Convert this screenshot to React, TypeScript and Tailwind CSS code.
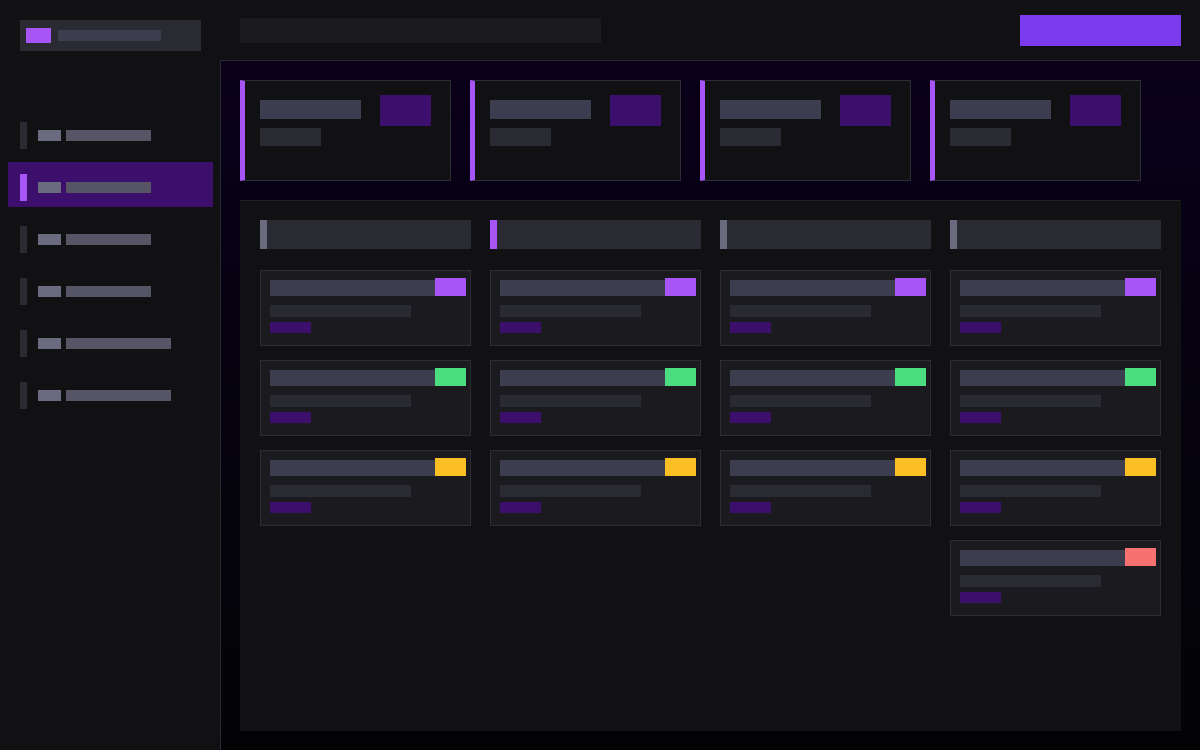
const navItems = [
  { width: "w-[85px]", active: false },
  { width: "w-[85px]", active: true },
  { width: "w-[85px]", active: false },
  { width: "w-[85px]", active: false },
  { width: "w-[105px]", active: false },
  { width: "w-[105px]", active: false },
];

const columns = [
  { accent: "bg-[#6b6b80]", tags: ["bg-[#a855f7]", "bg-[#4ade80]", "bg-[#fbbf24]"] },
  { accent: "bg-[#a855f7]", tags: ["bg-[#a855f7]", "bg-[#4ade80]", "bg-[#fbbf24]"] },
  { accent: "bg-[#6b6b80]", tags: ["bg-[#a855f7]", "bg-[#4ade80]", "bg-[#fbbf24]"] },
  {
    accent: "bg-[#6b6b80]",
    tags: ["bg-[#a855f7]", "bg-[#4ade80]", "bg-[#fbbf24]", "bg-[#f87171]"],
  },
];

const NavItem = ({ width, active }: { width: string; active: boolean }) => (
  <div
    className={`mx-2 flex h-[45px] w-[205px] items-start pl-3 pt-3 ${
      active ? "bg-[#3b0f6b]" : ""
    }`}
  >
    <div className={`h-[27px] w-[7px] ${active ? "bg-[#a855f7]" : "bg-[#2a2a33]"}`} />
    <div className="ml-[11px] mt-2 h-[11px] w-[23px] bg-[#6b6b80]" />
    <div className={`ml-[5px] mt-2 h-[11px] bg-[#555566] ${width}`} />
  </div>
);

const StatCard = () => (
  <div className="flex h-[101px] w-[211px] border border-l-[5px] border-[#2d2d35] border-l-[#a855f7] bg-[#111113] pl-[15px] pt-[14px]">
    <div className="flex flex-col">
      <div className="mt-[5px] h-[19px] w-[101px] bg-[#3d3d50]" />
      <div className="mt-[9px] h-[18px] w-[61px] bg-[#2a2a33]" />
    </div>
    <div className="ml-[19px] h-[31px] w-[51px] bg-[#3b0f6b]" />
  </div>
);

const TaskCard = ({ tag }: { tag: string }) => (
  <div className="h-[76px] w-[211px] border border-[#2d2d35] bg-[#1a1a1f] pl-[9px] pt-[7px]">
    <div className="flex h-[18px] items-end">
      <div className="h-4 w-[165px] bg-[#3d3d50]" />
      <div className={`h-[18px] w-[31px] ${tag}`} />
    </div>
    <div className="mt-[9px] h-3 w-[141px] bg-[#2a2a33]" />
    <div className="mt-[5px] h-[11px] w-[41px] bg-[#3b0f6b]" />
  </div>
);

const Column = ({ accent, tags }: { accent: string; tags: string[] }) => (
  <div className="flex w-[211px] flex-col">
    <div className="mb-[21px] flex h-[29px] bg-[#2a2a33]">
      <div className={`h-full w-[7px] ${accent}`} />
    </div>
    <div className="flex flex-col gap-[14px]">
      {tags.map((tag) => (
        <TaskCard key={tag} tag={tag} />
      ))}
    </div>
  </div>
);

const App = () => {
  return (
    <div className="flex h-[750px] w-[1200px] overflow-hidden bg-[#111113]">
      <aside className="w-[220px] shrink-0">
        <div className="ml-5 mt-5 flex h-[31px] w-[181px] items-center bg-[#2a2a33] pl-1.5">
          <div className="h-[15px] w-[25px] bg-[#a855f7]" />
          <div className="ml-[7px] h-[11px] w-[103px] bg-[#3d3d50]" />
        </div>
        <nav className="mt-[59px] flex flex-col gap-[7px]">
          {navItems.map((item, i) => (
            <NavItem key={i} width={item.width} active={item.active} />
          ))}
        </nav>
      </aside>

      <div className="flex min-w-0 flex-1 flex-col">
        <header className="flex h-[60px] shrink-0 items-center pl-5 pr-[19px]">
          <div className="h-[25px] w-[361px] bg-[#1a1a1f]" />
          <div className="ml-auto h-[31px] w-[161px] bg-[#7c3aed]" />
        </header>

        <main className="flex flex-1 flex-col border-l border-t border-[#2a2a33] bg-linear-to-b from-[#0a001a] to-[#030305] p-[19px]">
          <div className="flex gap-[19px]">
            <StatCard />
            <StatCard />
            <StatCard />
            <StatCard />
          </div>

          <section className="mt-[19px] flex flex-1 gap-[19px] border-t border-[#1f1f25] bg-[#111113] px-5 pt-[19px]">
            {columns.map((col, i) => (
              <Column key={i} accent={col.accent} tags={col.tags} />
            ))}
          </section>
        </main>
      </div>
    </div>
  );
};

export default App;
